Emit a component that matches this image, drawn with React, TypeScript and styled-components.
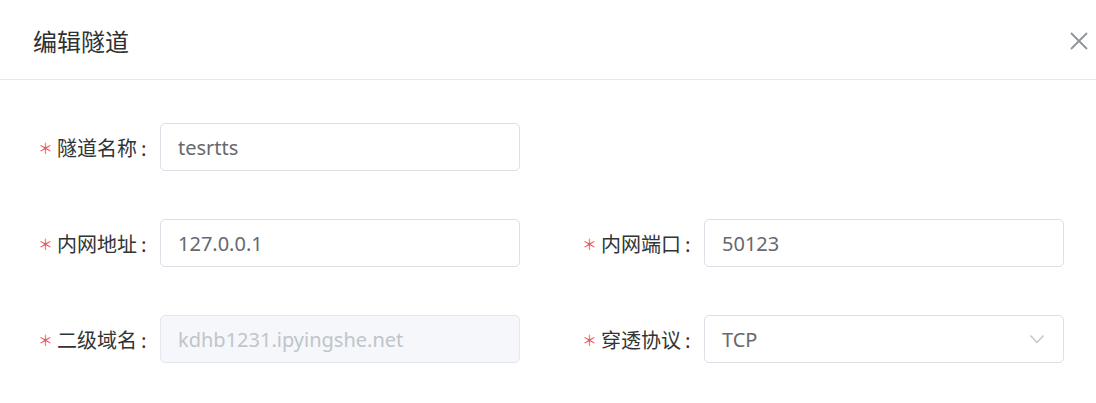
import React from "react";
import styled, { createGlobalStyle } from "styled-components";

const Global = createGlobalStyle`
  html, body { margin: 0; padding: 0; background: #fff; }
  body { font-family: "Noto Sans", "Noto Sans CJK SC", sans-serif; }
`;

const Dialog = styled.div`
  width: 1096px;
  height: 403px;
  background: #fff;
  overflow: hidden;
`;

const Header = styled.div`
  height: 80px;
  box-sizing: border-box;
  border-bottom: 1px solid #e8e8e8;
  display: flex;
  align-items: center;
  justify-content: space-between;
  padding: 2px 5px 0 33px;
`;

const Title = styled.h2`
  margin: 0;
  font-size: 24px;
  font-weight: 400;
  color: #303133;
  font-family: "Noto Sans CJK SC", sans-serif;
`;

const CloseButton = styled.button`
  border: none;
  background: transparent;
  padding: 0;
  width: 24px;
  height: 24px;
  display: flex;
  align-items: center;
  justify-content: center;
  cursor: pointer;
`;

const Body = styled.div`
  padding: 43px 32px 0 38px;
  display: grid;
  grid-template-columns: 544px 500px;
  row-gap: 48px;
`;

const Item = styled.div`
  display: flex;
  align-items: center;
`;

const Label = styled.label`
  width: 122px;
  box-sizing: border-box;
  padding: 0 12px 0 0;
  display: flex;
  align-items: center;
  font-size: 20px;
  color: #333;
  font-family: "Noto Sans CJK SC", sans-serif;
  white-space: nowrap;
`;

const Star = styled.span`
  color: #f5545f;
  font-size: 15px;
  width: 15px;
  margin-right: 4px;
  font-family: "Noto Sans CJK SC", sans-serif;
  line-height: 1;
`;

const Colon = styled.span`
  margin-left: 4px;
`;

const Field = styled.div<{ $disabled?: boolean }>`
  width: 360px;
  height: 48px;
  box-sizing: border-box;
  border: 1px solid ${(p) => (p.$disabled ? "#e4e7ed" : "#dcdfe6")};
  background: ${(p) => (p.$disabled ? "#f5f7fa" : "#fff")};
  border-radius: 5px;
  display: flex;
  align-items: center;
  justify-content: space-between;
  padding: 0 18px 0 17px;
  font-size: 20px;
  color: ${(p) => (p.$disabled ? "#c0c4cc" : "#66696e")};
  font-family: "Noto Sans", "Noto Sans CJK SC", sans-serif;
`;

const Chevron = () => (
  <svg width="16" height="10" viewBox="0 0 16 10" fill="none">
    <path d="M1.5 1.5 L8 8.5 L14.5 1.5" stroke="#c0c4cc" strokeWidth="1.4" />
  </svg>
);

const CloseIcon = () => (
  <svg width="18" height="18" viewBox="0 0 18 18" fill="none">
    <path d="M1 1 L17 17 M17 1 L1 17" stroke="#909399" strokeWidth="1.8" />
  </svg>
);

const FormItem = ({
  label,
  value,
  disabled,
  select,
}: {
  label: string;
  value: string;
  disabled?: boolean;
  select?: boolean;
}) => (
  <Item>
    <Label>
      <Star>＊</Star>
      {label}
      <Colon>:</Colon>
    </Label>
    <Field $disabled={disabled}>
      <span>{value}</span>
      {select && <Chevron />}
    </Field>
  </Item>
);

export default function App() {
  return (
    <>
      <Global />
      <Dialog>
        <Header>
          <Title>编辑隧道</Title>
          <CloseButton aria-label="close">
            <CloseIcon />
          </CloseButton>
        </Header>
        <Body>
          <FormItem label="隧道名称" value="tesrtts" />
          <div />
          <FormItem label="内网地址" value="127.0.0.1" />
          <FormItem label="内网端口" value="50123" />
          <FormItem label="二级域名" value="kdhb1231.ipyingshe.net" disabled />
          <FormItem label="穿透协议" value="TCP" select />
        </Body>
      </Dialog>
    </>
  );
}
